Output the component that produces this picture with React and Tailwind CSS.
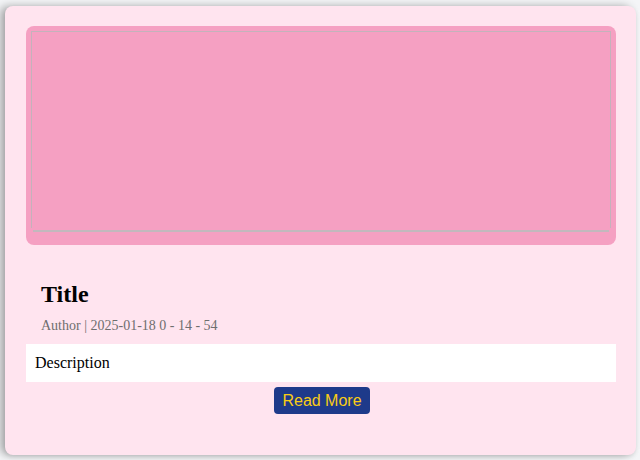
export default function App() {
    return (
        <main className="w-[640px] h-[460px] bg-[#f4f5f7] pt-[6px] pl-[5px] overflow-hidden" style={{ fontFamily: '"Liberation Serif", "Times New Roman", serif' }}>
            {/* Card */}
            <div className="w-[631px] h-[449px] bg-[#ffe4ef] rounded-[8px] pt-[20px] px-[20px] pl-[21px] shadow-[-5px_0_8px_rgba(0,0,0,0.3),0_2px_4px_rgba(0,0,0,0.08)]">
                {/* Image area */}
                <div className="w-[590px] h-[219px] bg-[#f5a0c2] rounded-[8px] pt-[5px] px-[5px]">
                    <div className="h-[197px] border border-b-0 border-[#c4b2bb]"></div>
                    <div className="mx-[2px] mt-[2px] h-[2px] bg-[#c2b8bd]"></div>
                </div>

                {/* Meta */}
                <div className="pl-[15px] pt-[36px]">
                    <h2 className="text-[24px] font-bold text-black leading-[27px]">Title</h2>
                    <p className="mt-[10px] text-[14px] leading-[16px] text-[#6e6e6e]">Author | 2025-01-18 0 - 14 - 54</p>
                </div>

                {/* Description */}
                <div className="mt-[10px] w-[590px] h-[38px] bg-white flex items-center px-[9px] text-[16px] text-black">
                    Description
                </div>

                <div className="flex justify-center mt-[5px] pl-[2px]">
                    <button
                        className="h-[27px] px-[8px] rounded-[4px] bg-[#1e3a8a] text-[#facc15] text-[16px] leading-[27px]"
                        style={{ fontFamily: '"Liberation Sans", Arial, sans-serif' }}
                    >
                        Read More
                    </button>
                </div>
            </div>
        </main>
    );
}
